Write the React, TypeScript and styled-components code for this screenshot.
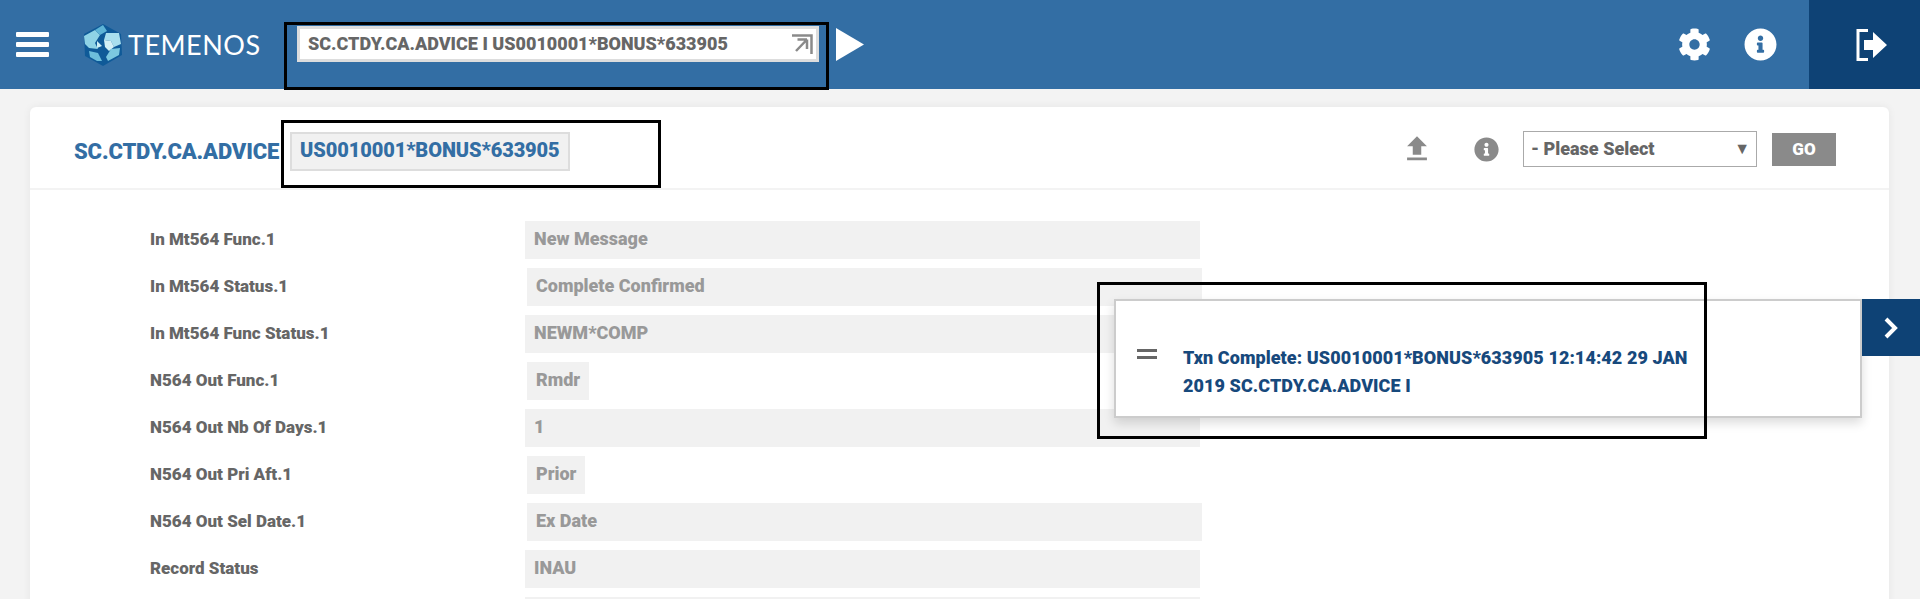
import React from "react";
import styled, {createGlobalStyle} from "styled-components";
import {FaCog, FaInfoCircle} from "react-icons/fa";
import {MdFileUpload} from "react-icons/md";

const blue = "#336ea4";
const navy = "#0e4275";

const GlobalStyle = createGlobalStyle`
  html, body {
    margin: 0;
    padding: 0;
    background: #f3f3f3;
    font-family: Roboto, "Liberation Sans", sans-serif;
  }
`;

const Page = styled.div`
  position: relative;
  width: 1920px;
  height: 599px;
  overflow: hidden;
  background: #f3f3f3;
`;

const Header = styled.header`
  display: flex;
  align-items: center;
  height: 89px;
  padding-left: 16px;
  background: ${blue};
`;

const MenuButton = styled.div`
  display: flex;
  flex-direction: column;
  justify-content: space-between;
  width: 33px;
  height: 25px;
  margin-right: 34px;

  span {
    height: 5px;
    border-radius: 1px;
    background: #fff;
  }
`;

const Logo = styled.div`
  display: flex;
  align-items: center;
  width: 214px;
  gap: 5px;
`;

const LogoText = styled.span`
  font-family: Lato, sans-serif;
  font-weight: 400;
  font-size: 27px;
  letter-spacing: 0.5px;
  color: #fff;
`;

const CommandBox = styled.div`
  display: flex;
  align-items: center;
  justify-content: space-between;
  box-sizing: border-box;
  width: 522px;
  height: 36px;
  margin-bottom: 1px;
  padding: 0 3px 0 8px;
  border: 3px solid #ddd;
  background: #fff;
  font-size: 18px;
  font-weight: 900;
  line-height: 28px;
  color: #666;
`;

const PlayButton = styled.svg`
  margin-left: 16px;
  margin-bottom: 1px;
`;

const HeaderIcons = styled.div`
  display: flex;
  gap: 33px;
  margin: 0 32px 0 auto;
  color: #fff;
  font-size: 33px;
`;

const ExitBlock = styled.div`
  display: flex;
  align-items: center;
  box-sizing: border-box;
  width: 111px;
  height: 89px;
  padding-left: 47px;
  background: ${navy};
`;

const Main = styled.main`
  padding: 18px 31px 0 30px;
`;

const Card = styled.section`
  border-radius: 6px 6px 0 0;
  background: #fff;
  box-shadow: 0 0 8px rgba(0, 0, 0, 0.06);
`;

const CardHead = styled.div`
  display: flex;
  align-items: center;
  height: 73px;
  padding: 8px 53px 0 44px;
  border-bottom: 2px solid #f3f3f3;
`;

const Title = styled.h1`
  margin: 0 11px 0 0;
  font-size: 22px;
  font-weight: 900;
  letter-spacing: -0.15px;
  color: ${blue};
`;

const RecordChip = styled.div`
  box-sizing: border-box;
  height: 39px;
  padding: 0 8px;
  border: 2px solid #ddd;
  background: #f1f1f1;
  font-size: 20px;
  font-weight: 900;
  letter-spacing: -0.1px;
  line-height: 33px;
  color: ${blue};
`;

const CardTools = styled.div`
  display: flex;
  align-items: center;
  margin: -5px 0 0 auto;
  color: #8a8a8a;
`;

const UploadIcon = styled.div`
  display: flex;
  margin-right: 40px;
  font-size: 34px;
`;

const InfoIcon = styled.div`
  display: flex;
  margin-right: 24px;
  font-size: 25px;
`;

const SelectBox = styled.div`
  display: flex;
  align-items: center;
  justify-content: space-between;
  box-sizing: border-box;
  width: 234px;
  height: 36px;
  margin-right: 15px;
  padding: 0 6px 1px 7px;
  border: 1px solid #aaa;
  background: #fff;
  font-size: 18px;
  font-weight: 900;
  color: #666;

  i {
    font-style: normal;
    font-size: 16px;
  }
`;

const GoButton = styled.div`
  width: 64px;
  height: 33px;
  background: #8a8a8a;
  font-size: 17px;
  font-weight: 900;
  line-height: 33px;
  text-align: center;
  color: #fff;
`;

const Fields = styled.div`
  display: flex;
  flex-direction: column;
  gap: 9px;
  padding: 31px 0 0 120px;
`;

const Row = styled.div`
  display: flex;
  align-items: center;
`;

const Label = styled.div`
  width: 375px;
  margin-top: -2px;
  font-size: 17px;
  font-weight: 900;
  color: #666;
`;

const Value = styled.div<{$inset?: boolean; $fit?: boolean}>`
  box-sizing: border-box;
  width: ${p => (p.$fit ? "auto" : "675px")};
  height: 38px;
  margin-left: ${p => (p.$inset ? "2px" : "0")};
  padding: 0 9px;
  background: #f1f1f1;
  font-size: 18px;
  font-weight: 900;
  line-height: 36px;
  color: #999;
`;

const Flyout = styled.div`
  position: absolute;
  left: 1114px;
  top: 299px;
  display: flex;
  box-sizing: border-box;
  width: 748px;
  height: 119px;
  padding: 46px 0 0 21px;
  border: 2px solid #ccc;
  background: #fff;
  box-shadow: 0 5px 10px rgba(0, 0, 0, 0.14);
`;

const FlyoutHandle = styled.div`
  display: flex;
  flex-direction: column;
  gap: 4px;
  width: 20px;
  margin: 2px 26px 0 0;

  span {
    height: 3px;
    background: #666;
  }
`;

const FlyoutText = styled.p`
  width: 520px;
  margin: -3px 0 0;
  font-size: 18px;
  font-weight: 900;
  letter-spacing: 0.07px;
  line-height: 28px;
  color: #17497c;
`;

const FlyoutTab = styled.div`
  position: absolute;
  left: 1862px;
  top: 299px;
  display: flex;
  align-items: center;
  justify-content: center;
  width: 58px;
  height: 57px;
  background: ${navy};
`;

const Callout = styled.div<{$x: number; $y: number; $w: number; $h: number}>`
  position: absolute;
  left: ${p => p.$x}px;
  top: ${p => p.$y}px;
  box-sizing: border-box;
  width: ${p => p.$w}px;
  height: ${p => p.$h}px;
  border: 3px solid #000;
  pointer-events: none;
`;

const GlobeLogo = () => (
    <svg width="40" height="42" viewBox="0 0 40 42">
        <polygon points="20,0 38,10 39,31 20,42 2,32 1,10" fill="#0f5a98"/>
        <polygon points="1,12 12,6 17,11 12,19 15,25 6,24 2,20" fill="#8fd3e6"/>
        <polygon points="12,6 20,1 24,7 17,11" fill="#5eb4d6"/>
        <polygon points="23,9 36,9 38,20 31,23 28,17 21,16" fill="#a9dfee"/>
        <polygon points="21,16 28,17 31,23 26,27 22,23" fill="#d3f0f6"/>
        <polygon points="28,25 37,24 36,31 25,37 23,33" fill="#7cc8e0"/>
        <polygon points="6,27 15,29 19,37 14,37 7,33" fill="#6dbedb"/>
        <polygon points="14,17 19,22 14,24" fill="#cdeef5"/>
    </svg>
);

const OpenIcon = () => (
    <svg width="21" height="21" viewBox="0 0 21 21">
        <path d="M0 1.5H19.5V20" fill="none" stroke="#8a8a8a" strokeWidth="2.5"/>
        <path d="M15 5.5H5.5M15 5.5V15M15 5.5L4 17" fill="none" stroke="#8a8a8a" strokeWidth="2.5"/>
    </svg>
);

const ExitIcon = () => (
    <svg width="32" height="32" viewBox="0 0 32 32">
        <path d="M12 1.5H2V30.5H12" fill="none" stroke="#fff" strokeWidth="3"/>
        <path d="M8 11H17V3L31 16L17 29V21H8Z" fill="#fff"/>
    </svg>
);

const fields = [
    {label: "In Mt564 Func.1", value: "New Message"},
    {label: "In Mt564 Status.1", value: "Complete Confirmed", inset: true},
    {label: "In Mt564 Func Status.1", value: "NEWM*COMP"},
    {label: "N564 Out Func.1", value: "Rmdr", inset: true, fit: true},
    {label: "N564 Out Nb Of Days.1", value: "1"},
    {label: "N564 Out Pri Aft.1", value: "Prior", inset: true, fit: true},
    {label: "N564 Out Sel Date.1", value: "Ex Date", inset: true},
    {label: "Record Status", value: "INAU"},
    {label: "", value: ""},
];

const App: React.FunctionComponent = () => (
    <Page>
        <GlobalStyle/>
        <Header>
            <MenuButton><span/><span/><span/></MenuButton>
            <Logo>
                <GlobeLogo/>
                <LogoText>TEMENOS</LogoText>
            </Logo>
            <CommandBox>
                SC.CTDY.CA.ADVICE I US0010001*BONUS*633905
                <OpenIcon/>
            </CommandBox>
            <PlayButton width="30" height="33" viewBox="0 0 30 33">
                <polygon points="1,0 29,16.5 1,33" fill="#fff"/>
            </PlayButton>
            <HeaderIcons>
                <FaCog/>
                <FaInfoCircle/>
            </HeaderIcons>
            <ExitBlock><ExitIcon/></ExitBlock>
        </Header>
        <Main>
            <Card>
                <CardHead>
                    <Title>SC.CTDY.CA.ADVICE</Title>
                    <RecordChip>US0010001*BONUS*633905</RecordChip>
                    <CardTools>
                        <UploadIcon><MdFileUpload/></UploadIcon>
                        <InfoIcon><FaInfoCircle/></InfoIcon>
                        <SelectBox>- Please Select<i>▼</i></SelectBox>
                        <GoButton>GO</GoButton>
                    </CardTools>
                </CardHead>
                <Fields>
                    {fields.map((f, i) => (
                        <Row key={i}>
                            <Label>{f.label}</Label>
                            <Value $inset={f.inset} $fit={f.fit}>{f.value}</Value>
                        </Row>
                    ))}
                </Fields>
            </Card>
        </Main>
        <Flyout>
            <FlyoutHandle><span/><span/></FlyoutHandle>
            <FlyoutText>Txn Complete: US0010001*BONUS*633905 12:14:42 29 JAN 2019 SC.CTDY.CA.ADVICE I</FlyoutText>
        </Flyout>
        <FlyoutTab>
            <svg width="16" height="22" viewBox="0 0 16 22">
                <path d="M3 2L12 11L3 20" fill="none" stroke="#fff" strokeWidth="4"/>
            </svg>
        </FlyoutTab>
        <Callout $x={284} $y={22} $w={545} $h={68}/>
        <Callout $x={281} $y={120} $w={380} $h={68}/>
        <Callout $x={1097} $y={282} $w={610} $h={157}/>
    </Page>
);

export default App;
